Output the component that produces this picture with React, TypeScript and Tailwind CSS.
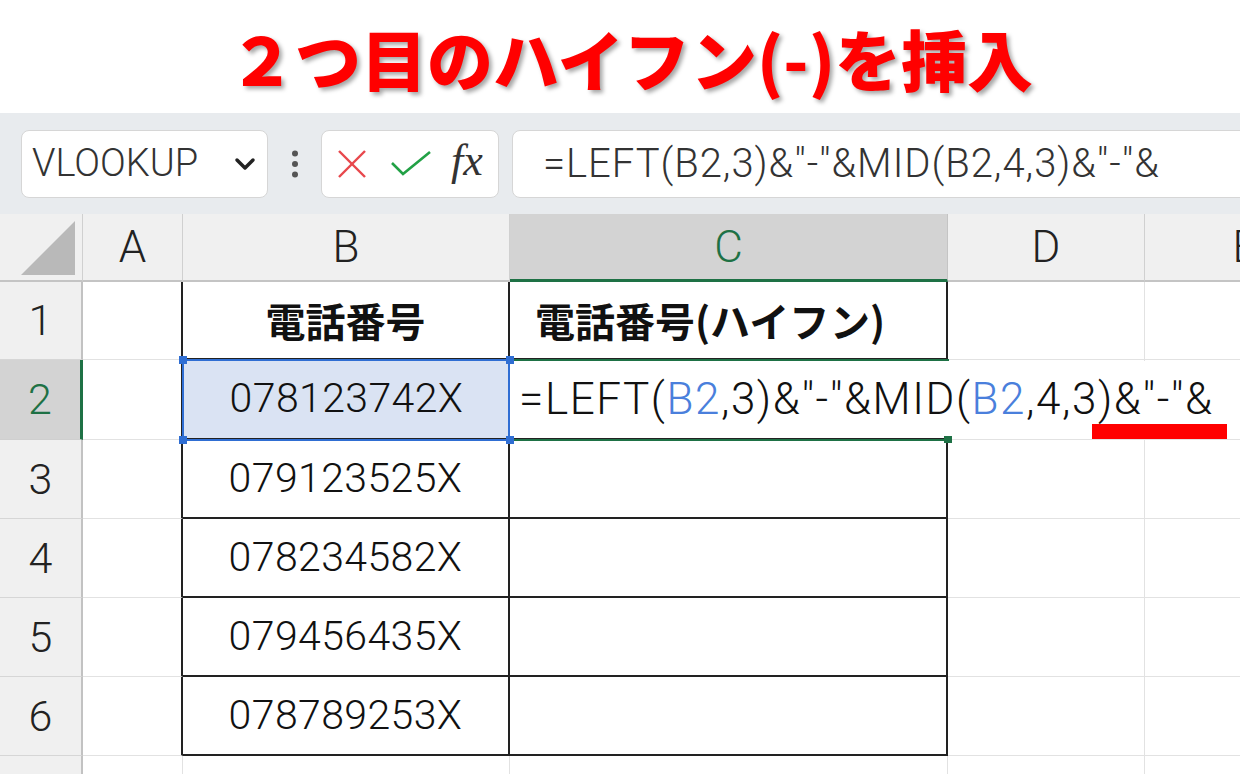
import React from "react";

const roboto = "font-['Roboto','Noto_Sans_CJK_JP',sans-serif] font-light";
const jp = "font-['Noto_Sans_CJK_JP',sans-serif]";

function RowHdr({ n, active }: { n: string; active?: boolean }) {
  return active ? (
    <div className={`w-[83px] shrink-0 bg-[#d3d3d3] border-r-[3px] border-r-[#1e7145] border-b border-b-[#cfcfcf] flex items-center justify-center text-[43px] text-[#1e7145] ${roboto}`}>
      {n}
    </div>
  ) : (
    <div className={`w-[83px] shrink-0 bg-[#f0f0f0] border-r-2 border-r-[#c2c2c2] border-b border-b-[#d6d6d6] flex items-center justify-center text-[43px] text-[#222] ${roboto}`}>
      {n}
    </div>
  );
}

function DataRow({ n, phone, h }: { n: string; phone: string; h: string }) {
  return (
    <div className={`flex ${h}`}>
      <RowHdr n={n} />
      <div className="w-[100px] shrink-0 border-r-2 border-r-[#222] border-b border-b-[#e2e2e2]" />
      <div className={`w-[327px] shrink-0 border-r-2 border-b-2 border-[#222] flex items-center justify-center text-[41px] tracking-[0.4px] text-[#111] ${roboto}`}>
        {phone}
      </div>
      <div className="w-[438px] shrink-0 border-r-2 border-b-2 border-[#222]" />
      <div className="w-[197px] shrink-0 border-r border-b border-[#e2e2e2]" />
      <div className="w-[200px] shrink-0 border-b border-[#e2e2e2]" />
    </div>
  );
}

export default function App() {
  return (
    <div className="w-[1240px] h-[774px] overflow-hidden bg-white">
      {/* Title */}
      <div className="h-[113px] flex items-center justify-center pl-[22px]">
        <div className={`text-[66px] leading-none font-black text-[#ff0000] ${jp} [text-shadow:3px_3px_4px_rgba(0,0,0,0.35)]`}>
          ２つ目のハイフン(-)を挿入
        </div>
      </div>

      {/* Formula bar */}
      <div className="h-[101px] bg-[#e8ebee] flex items-center pl-[21px] overflow-hidden">
        <div className="w-[247px] h-[68px] shrink-0 bg-white rounded-[8px] border border-[#d6d6d6] flex items-center pl-[10px] pr-[10px] justify-between">
          <span className={`text-[38px] text-[#333] ${roboto}`}>VLOOKUP</span>
          <svg width="22" height="14" viewBox="0 0 22 14" className="mr-[1px]">
            <polyline points="3,3 11,11 19,3" fill="none" stroke="#222" strokeWidth="3.5" strokeLinecap="round" strokeLinejoin="round" />
          </svg>
        </div>
        <div className="w-[53px] shrink-0 flex justify-center">
          <svg width="8" height="28" viewBox="0 0 8 28">
            <circle cx="4" cy="3.5" r="3" fill="#555" />
            <circle cx="4" cy="14" r="3" fill="#555" />
            <circle cx="4" cy="24.5" r="3" fill="#555" />
          </svg>
        </div>
        <div className="w-[178px] h-[68px] shrink-0 bg-white rounded-[8px] border border-[#d6d6d6] flex items-center pl-[15px]">
          <svg width="30" height="30" viewBox="0 0 30 30">
            <line x1="2" y1="2" x2="28" y2="28" stroke="#e8474c" strokeWidth="2.4" />
            <line x1="28" y1="2" x2="2" y2="28" stroke="#e8474c" strokeWidth="2.4" />
          </svg>
          <svg width="42" height="28" viewBox="0 0 42 28" className="ml-[23px]">
            <polyline points="2,13 13,24 40,2" fill="none" stroke="#22a146" strokeWidth="2.6" />
          </svg>
          <span className="ml-[19px] text-[44px] italic leading-none text-[#333] font-['Liberation_Serif',serif] -mt-[6px]">fx</span>
        </div>
        <div className="ml-[13px] w-[760px] h-[68px] shrink-0 bg-white rounded-[8px] border border-[#d6d6d6] flex items-center pl-[30px]">
          <span className={`text-[40px] tracking-[0.95px] text-[#333] whitespace-nowrap ${roboto}`}>
            =LEFT(B2,3)&amp;"-"&amp;MID(B2,4,3)&amp;"-"&amp;
          </span>
        </div>
      </div>

      {/* Grid */}
      <div className="relative">
        {/* column headers */}
        <div className={`flex h-[68px] bg-[#f0f0f0] text-[44px] text-[#222] ${roboto}`}>
          <div className="w-[83px] shrink-0 border-r border-r-[#d0d0d0] border-b-2 border-b-[#c4c4c4] flex items-end justify-end pr-[6px] pb-[4px]">
            <svg width="56" height="56" viewBox="0 0 56 56">
              <polygon points="55,1 55,55 1,55" fill="#b9b9b9" />
            </svg>
          </div>
          <div className="w-[100px] shrink-0 border-r border-r-[#d0d0d0] border-b-2 border-b-[#c4c4c4] flex items-center justify-center">A</div>
          <div className="w-[327px] shrink-0 border-r border-r-[#d0d0d0] border-b-2 border-b-[#c4c4c4] flex items-center justify-center">B</div>
          <div className="w-[438px] shrink-0 bg-[#d3d3d3] border-r border-r-[#c4c4c4] border-b-[3px] border-b-[#1e7145] flex items-center justify-center text-[#1e7145]">C</div>
          <div className="w-[197px] shrink-0 border-r border-r-[#d0d0d0] border-b-2 border-b-[#c4c4c4] flex items-center justify-center">D</div>
          <div className="w-[200px] shrink-0 border-b-2 border-b-[#c4c4c4] flex items-center justify-center">E</div>
        </div>

        {/* row 1 */}
        <div className="flex h-[78px]">
          <RowHdr n="1" />
          <div className="w-[100px] shrink-0 border-r-2 border-r-[#222] border-b border-b-[#e2e2e2]" />
          <div className={`w-[327px] shrink-0 border-r-2 border-b-2 border-[#222] flex items-center justify-center text-[40px] font-bold text-[#111] ${jp}`}>
            電話番号
          </div>
          <div className={`w-[438px] shrink-0 border-r-2 border-b-2 border-[#222] flex items-center pl-[25px] text-[40px] font-bold text-[#111] ${jp}`}>
            電話番号(ハイフン)
          </div>
          <div className="w-[197px] shrink-0 border-r border-b border-[#e2e2e2]" />
          <div className="w-[200px] shrink-0 border-b border-[#e2e2e2]" />
        </div>

        {/* row 2 */}
        <div className="flex h-[80px]">
          <RowHdr n="2" active />
          <div className="w-[100px] shrink-0 border-r-2 border-r-[#222] border-b border-b-[#e2e2e2]" />
          <div className={`w-[327px] shrink-0 bg-[#dae3f3] border-b-2 border-[#222] flex items-center justify-center text-[41px] tracking-[0.4px] text-[#111] ${roboto}`}>
            078123742X
          </div>
          <div className="w-[438px] shrink-0 border-b-2 border-[#222]" />
          <div className="w-[197px] shrink-0 border-r border-b border-[#e2e2e2]" />
          <div className="w-[200px] shrink-0 border-b border-[#e2e2e2]" />
        </div>

        <DataRow n="3" phone="079123525X" h="h-[79px]" />
        <DataRow n="4" phone="078234582X" h="h-[79px]" />
        <DataRow n="5" phone="079456435X" h="h-[79px]" />
        <DataRow n="6" phone="078789253X" h="h-[79px]" />

        {/* row 7 */}
        <div className="flex h-[40px]">
          <div className="w-[83px] shrink-0 bg-[#f0f0f0] border-r-2 border-r-[#c2c2c2]" />
          <div className="w-[100px] shrink-0 border-r border-[#e2e2e2]" />
          <div className="w-[327px] shrink-0 border-r border-[#e2e2e2]" />
          <div className="w-[438px] shrink-0 border-r border-[#e2e2e2]" />
          <div className="w-[197px] shrink-0 border-r border-[#e2e2e2]" />
        </div>

        {/* in-cell editor for C2 */}
        <div className={`absolute left-[511px] top-[147px] h-[76px] w-[729px] bg-white z-10 flex items-center pl-[8px] text-[44px] tracking-[1.55px] text-[#111] whitespace-nowrap ${roboto}`}>
          <span>=LEFT(</span>
          <span className="text-[#4a7fdc]">B2</span>
          <span>,3)&amp;"-"&amp;MID(</span>
          <span className="text-[#4a7fdc]">B2</span>
          <span>,4,3)&amp;"-"&amp;</span>
        </div>

        {/* C2 active cell border */}
        <div className="absolute left-[508px] top-[145px] w-[441px] h-[82px] border-t-2 border-b-2 border-l-2 border-[#1e7145] z-20" />
        <div className="absolute left-[944px] top-[222px] w-[8px] h-[7px] bg-[#1e7145] z-20" />

        {/* B2 selection */}
        <div className="absolute left-[182px] top-[145px] w-[328px] h-[82px] border-2 border-[#2f6ed3] z-20" />
        <div className="absolute left-[179px] top-[142px] w-[8px] h-[8px] bg-[#2f6ed3] z-30" />
        <div className="absolute left-[506px] top-[142px] w-[8px] h-[8px] bg-[#2f6ed3] z-30" />
        <div className="absolute left-[179px] top-[222px] w-[8px] h-[8px] bg-[#2f6ed3] z-30" />
        <div className="absolute left-[506px] top-[222px] w-[8px] h-[8px] bg-[#2f6ed3] z-30" />

        {/* red underline annotation */}
        <div className="absolute left-[1092px] top-[210px] w-[135px] h-[15px] bg-[#ff0000] z-30" />
      </div>
    </div>
  );
}
